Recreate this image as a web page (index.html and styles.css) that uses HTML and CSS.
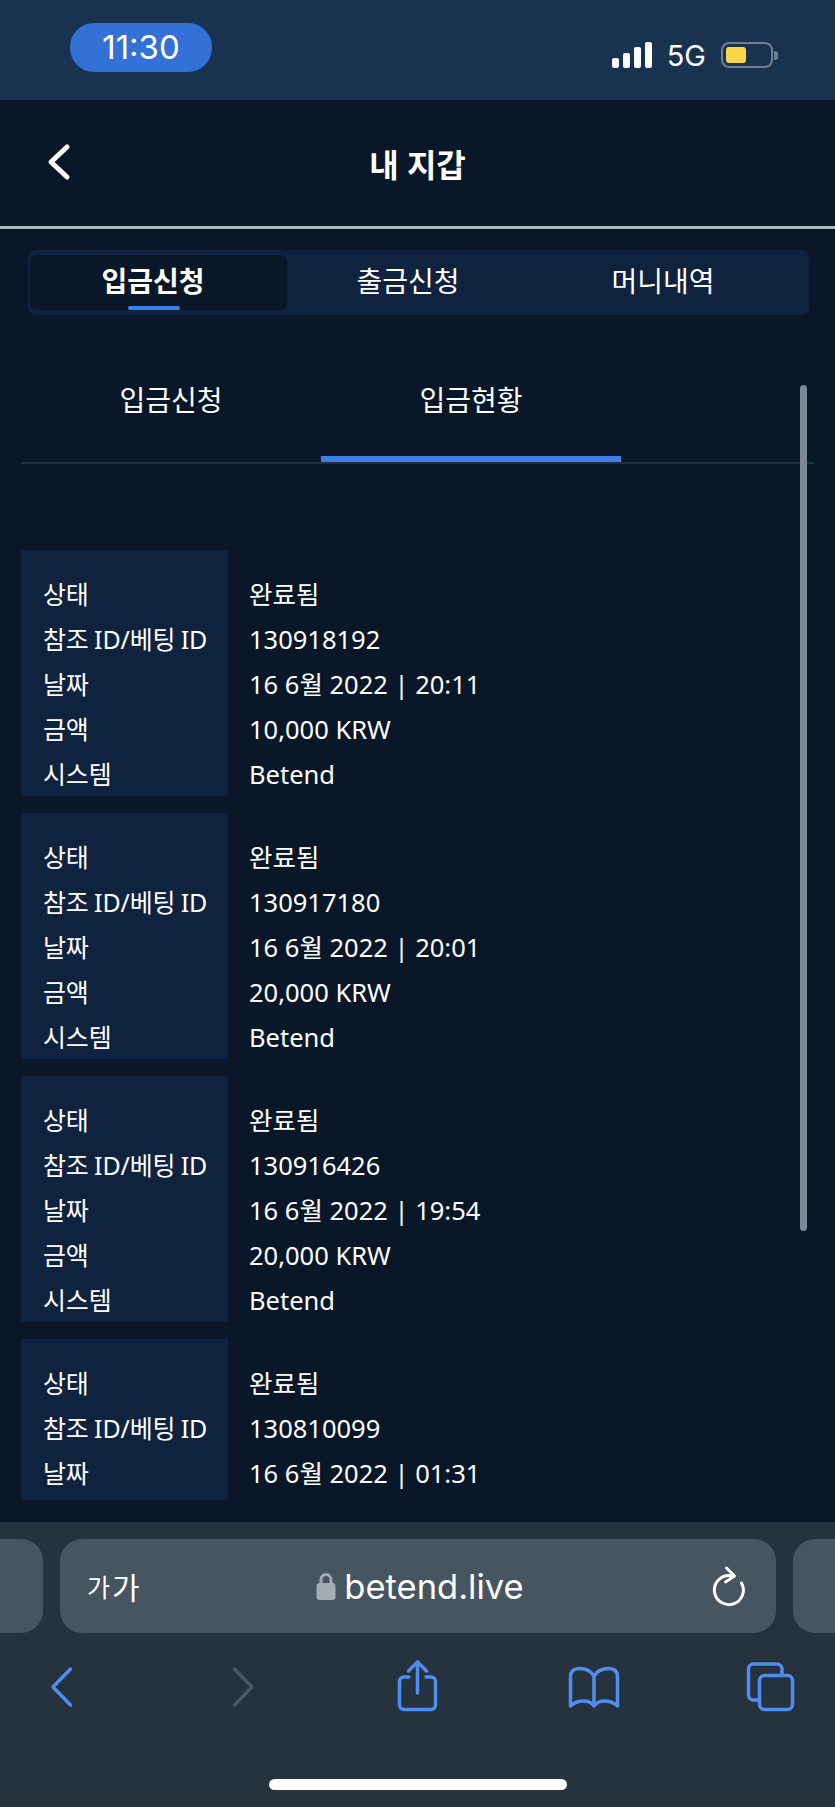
FILE: index.html
```html
<!DOCTYPE html>
<html lang="ko">
  <head>
    <meta charset="UTF-8">
    <title>내 지갑</title>
    <link rel="stylesheet" href="styles.css">
  </head>
  <body>
    <div class="phone">
      <!-- Status bar -->
      <div class="status-bar">
        <div class="time">11:30</div>
        <div class="status-right">
          <div class="signal">
            <span class="bar bar-1"></span>
            <span class="bar bar-2"></span>
            <span class="bar bar-3"></span>
            <span class="bar bar-4"></span>
          </div>
          <span class="network">5G</span>
          <div class="battery"><span class="battery-fill"></span></div>
          <span class="battery-nub"></span>
        </div>
      </div>

      <!-- Page header -->
      <header class="header">
        <svg class="back-icon" width="26" height="38" viewBox="0 0 26 38"><path d="M21 4 L5 19 L21 34"/></svg>
        <h1 class="title">내 지갑</h1>
      </header>

      <main class="main">
        <div class="tabs">
          <div class="tab tab-active">입금신청<span class="tab-mark"></span></div>
          <div class="tab">출금신청</div>
          <div class="tab">머니내역</div>
        </div>

        <div class="subtabs">
          <div class="subtab">입금신청</div>
          <div class="subtab subtab-active">입금현황</div>
        </div>

        <div class="list">
          <div class="card">
            <div class="labels">
              <div class="row">상태</div>
              <div class="row">참조 ID/베팅 ID</div>
              <div class="row">날짜</div>
              <div class="row">금액</div>
              <div class="row">시스템</div>
            </div>
            <div class="values">
              <div class="row">완료됨</div>
              <div class="row">130918192</div>
              <div class="row">16 6월 2022 | 20:11</div>
              <div class="row">10,000 KRW</div>
              <div class="row">Betend</div>
            </div>
          </div>
          <div class="card">
            <div class="labels">
              <div class="row">상태</div>
              <div class="row">참조 ID/베팅 ID</div>
              <div class="row">날짜</div>
              <div class="row">금액</div>
              <div class="row">시스템</div>
            </div>
            <div class="values">
              <div class="row">완료됨</div>
              <div class="row">130917180</div>
              <div class="row">16 6월 2022 | 20:01</div>
              <div class="row">20,000 KRW</div>
              <div class="row">Betend</div>
            </div>
          </div>
          <div class="card">
            <div class="labels">
              <div class="row">상태</div>
              <div class="row">참조 ID/베팅 ID</div>
              <div class="row">날짜</div>
              <div class="row">금액</div>
              <div class="row">시스템</div>
            </div>
            <div class="values">
              <div class="row">완료됨</div>
              <div class="row">130916426</div>
              <div class="row">16 6월 2022 | 19:54</div>
              <div class="row">20,000 KRW</div>
              <div class="row">Betend</div>
            </div>
          </div>
          <!-- Last card runs under the toolbar, only three rows are showing -->
          <div class="card card-cut">
            <div class="labels">
              <div class="row">상태</div>
              <div class="row">참조 ID/베팅 ID</div>
              <div class="row">날짜</div>
            </div>
            <div class="values">
              <div class="row">완료됨</div>
              <div class="row">130810099</div>
              <div class="row">16 6월 2022 | 01:31</div>
            </div>
          </div>
        </div>

        <div class="scrollbar"></div>
      </main>

      <!-- Browser toolbar -->
      <footer class="toolbar">
        <div class="url-row">
          <div class="url-stub url-stub-left"></div>
          <div class="url-bar">
            <div class="font-size-btn"><span class="small-ga">가</span><span class="big-ga">가</span></div>
            <div class="address">
              <svg class="lock" width="20" height="28" viewBox="0 0 20 28"><path class="lock-loop" d="M5 13 V7.5 a5 5 0 0 1 10 0 V13"/><rect class="lock-body" x="0.5" y="11" width="19" height="17" rx="3"/></svg>
              <span>betend.live</span>
            </div>
            <svg class="reload" width="36" height="42" viewBox="0 0 36 42"><path d="M20 10.8 A14.5 14.5 0 1 0 30.5 18"/><path d="M15.5 3 L23.5 11 L14.5 17"/></svg>
          </div>
          <div class="url-stub url-stub-right"></div>
        </div>

        <div class="nav">
          <svg class="nav-icon nav-back" width="25" height="52" viewBox="0 0 25 52"><path d="M21.5 9 L4 27 L21.5 45"/></svg>
          <svg class="nav-icon nav-forward" width="25" height="52" viewBox="0 0 25 52"><path d="M3.5 9 L21 27 L3.5 45"/></svg>
          <svg class="nav-icon nav-share" width="43" height="52" viewBox="0 0 43 52"><path d="M13 17 H8 a4.5 4.5 0 0 0 -4.5 4.5 V45 a4.5 4.5 0 0 0 4.5 4.5 H35 a4.5 4.5 0 0 0 4.5 -4.5 V21.500 a4.5 4.5 0 0 0 -4.5 -4.5 H30"/><path d="M21.5 33 V2"/><path d="M12.500 11 L21.500 2 L30.500 11"/></svg>
          <svg class="nav-icon nav-book" width="54" height="52" viewBox="0 0 54 52"><path d="M27 16 C24 11 18 8.5 12 8.500 C7 8.500 3.500 11 3.500 17 V46 C8 42 12 41 16 41 C21 41 25 43 27 46 C29 43 33 41 38 41 C42 41 46 42 50.500 46 V17 C50.500 11 47 8.500 42 8.500 C36 8.500 30 11 27 16 V46"/></svg>
          <svg class="nav-icon nav-pages" width="51" height="52" viewBox="0 0 51 52"><rect x="14.500" y="15.500" width="33" height="34" rx="5"/><path d="M37 15.500 V9 a5 5 0 0 0 -5 -5 H8.500 a5 5 0 0 0 -5 5 V35 a5 5 0 0 0 5 5 H14.500"/></svg>
        </div>

        <div class="home-bar"></div>
      </footer>
    </div>
  </body>
</html>
```

FILE: styles.css
```css
* {
  box-sizing: border-box;
}
body {
  margin: 0;
  background-color: #0a1728;
  color: white;
  font-family: "Noto Sans", "Noto Sans CJK KR", sans-serif;
}
.phone {
  display: flex;
  flex-direction: column;
  width: 835px;
  height: 1807px;
  overflow: hidden;
}

/* Status bar */
.status-bar {
  display: flex;
  flex: none;
  height: 100px;
  padding: 23px 57px 0 70px;
  background-color: #19324f;
  font-family: Inter, "Liberation Sans", sans-serif;
}
.time {
  width: 142px;
  height: 49px;
  border-radius: 24px;
  background-color: #3371d6;
  font-size: 33px;
  line-height: 49px;
  text-align: center;
}
.status-right {
  display: flex;
  align-items: flex-end;
  height: 26px;
  margin: 19px 0 0 auto;
}
.signal {
  display: flex;
  align-items: flex-end;
  gap: 4px;
  height: 26px;
}
.bar {
  width: 7px;
  border-radius: 2px;
  background-color: white;
}
.bar-1 { height: 10px; }
.bar-2 { height: 15px; }
.bar-3 { height: 21px; }
.bar-4 { height: 26px; }
.network {
  margin: 0 15px;
  font-size: 29px;
  line-height: 25px;
}
.battery {
  width: 52px;
  height: 26px;
  padding: 3px;
  border: 2px solid #6f7f92;
  border-radius: 8px;
}
.battery-fill {
  display: block;
  width: 20px;
  height: 16px;
  border-radius: 3px;
  background-color: #fbd646;
}
.battery-nub {
  width: 4px;
  height: 9px;
  margin: 0 0 8px 1px;
  border-radius: 0 3px 3px 0;
  background-color: #6f7f92;
}

/* Header */
.header {
  position: relative;
  display: flex;
  flex: none;
  align-items: center;
  justify-content: center;
  height: 129px;
  border-bottom: 3px solid #b5b8bb;
}
.back-icon {
  position: absolute;
  left: 46px;
  top: 43px;
}
.back-icon path {
  fill: none;
  stroke: white;
  stroke-width: 5;
  stroke-linecap: round;
  stroke-linejoin: round;
}
.title {
  margin: 0;
  font-size: 32px;
  font-weight: 700;
}

.main {
  position: relative;
  display: flex;
  flex: 1;
  flex-direction: column;
  min-height: 0;
}

/* Top tabs */
.tabs {
  display: grid;
  flex: none;
  grid-template-columns: 257px 242px 268px;
  height: 65px;
  margin: 21px 26px 0 28px;
  padding: 5px 2px;
  border-radius: 8px;
  background-color: #10233e;
}
.tab {
  position: relative;
  font-size: 28px;
  line-height: 52px;
  text-align: center;
}
.tab-active {
  padding-right: 11px;
  border-radius: 6px;
  background-color: #0a1728;
  font-weight: 700;
}
.tab-mark {
  position: absolute;
  left: 98px;
  bottom: 0;
  width: 52px;
  height: 4px;
  border-radius: 2px;
  background-color: #3882f0;
}

/* Second row of tabs */
.subtabs {
  display: flex;
  flex: none;
  margin: 55px 21px 0;
  border-bottom: 2px solid #232f3f;
}
.subtab {
  width: 300px;
  height: 92px;
  font-size: 28px;
  line-height: 60px;
  text-align: center;
  border-bottom: 6px solid transparent;
}
.subtab-active {
  border-bottom-color: #3882f0;
}

/* Deposit list */
.list {
  display: flex;
  flex-direction: column;
  gap: 17px;
  margin: 86px 0 0 21px;
}
.card {
  display: flex;
  flex: none;
  height: 246px;
  font-size: 25px;
}
.card-cut {
  height: 161px;
}
.labels {
  width: 207px;
  padding: 22px 0 0 22px;
  background-color: #10233e;
  letter-spacing: -0.15px;
  word-spacing: -1px;
}
.values {
  padding: 22px 0 0 21px;
  font-size: 25.5px;
}
.row {
  height: 45px;
  line-height: 45px;
  white-space: nowrap;
}
.scrollbar {
  position: absolute;
  top: 156px;
  left: 800px;
  width: 7px;
  height: 846px;
  border-radius: 4px;
  background-color: #7f8792;
}

/* Browser toolbar */
.toolbar {
  display: flex;
  flex: none;
  flex-direction: column;
  height: 285px;
  padding-top: 17px;
  background-color: #26333f;
}
.url-row {
  display: flex;
  gap: 17px;
  height: 94px;
}
.url-stub {
  width: 43px;
  background-color: #475561;
}
.url-stub-left {
  border-radius: 0 22px 22px 0;
}
.url-stub-right {
  flex: 1;
  border-radius: 22px 0 0 22px;
}
.url-bar {
  display: flex;
  align-items: center;
  width: 716px;
  padding: 0 29px 0 27px;
  border-radius: 22px;
  background-color: #475561;
}
.font-size-btn {
  display: flex;
  align-items: center;
  gap: 2px;
  width: 60px;
  white-space: nowrap;
}
.small-ga {
  font-size: 25px;
}
.big-ga {
  font-size: 30px;
}
.address {
  display: flex;
  flex: 1;
  align-items: center;
  justify-content: center;
  gap: 8px;
  padding-right: 18px;
  font-family: Inter, "Liberation Sans", sans-serif;
  font-size: 34.5px;
}
.lock-loop {
  fill: none;
  stroke: #a5abb3;
  stroke-width: 3;
}
.lock-body {
  fill: #a5abb3;
}
.reload path {
  fill: none;
  stroke: white;
  stroke-width: 3;
  stroke-linecap: round;
  stroke-linejoin: round;
}
.nav {
  display: flex;
  height: 52px;
  margin-top: 27px;
  padding-left: 49px;
}
.nav-icon {
  flex: none;
  fill: none;
  stroke: #4f8df0;
  stroke-width: 3.5;
  stroke-linecap: round;
  stroke-linejoin: round;
}
.nav-forward {
  margin-left: 157px;
  stroke: #4c5762;
}
.nav-share {
  margin-left: 140px;
}
.nav-book {
  margin-left: 128px;
}
.nav-pages {
  margin-left: 124px;
}
.home-bar {
  flex: none;
  width: 298px;
  height: 11px;
  margin: auto 0 17px 269px;
  border-radius: 6px;
  background-color: white;
}
```
